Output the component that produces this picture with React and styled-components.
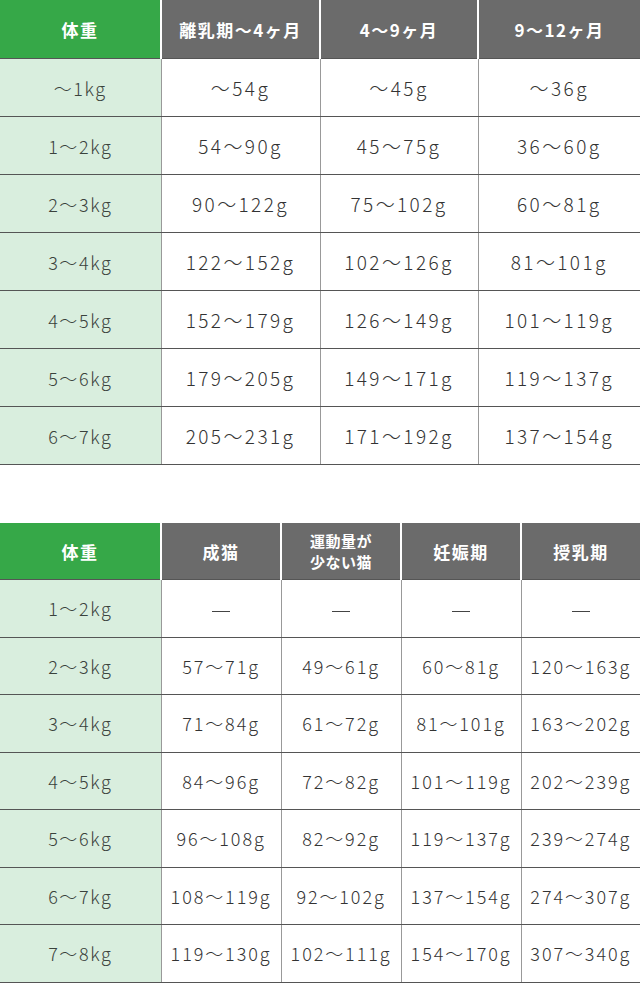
import React from "react";
import styled, { createGlobalStyle } from "styled-components";

const Global = createGlobalStyle`
  html, body { margin: 0; padding: 0; background: #fff; }
  body { font-family: "Noto Sans CJK JP", "Noto Sans", sans-serif; color: #333; }
`;

const Page = styled.div`
  display: flex;
  flex-direction: column;
  gap: 58px;
  width: 640px;
`;

const Table = styled.table`
  width: 640px;
  border-collapse: collapse;
  table-layout: fixed;
`;

const Head = styled.th`
  height: ${(p) => p.$h}px;
  padding: 0;
  background: ${(p) => (p.$first ? "#36a848" : "#6b6b6b")};
  color: #fff;
  font-weight: 700;
  font-size: ${(p) => (p.$small ? 15 : 17)}px;
  line-height: ${(p) => (p.$small ? "21px" : "1")};
  letter-spacing: ${(p) => (p.$small ? "0.5px" : "1.5px")};
  text-align: center;
  vertical-align: middle;
  border-bottom: 1px solid #555;
  border-left: ${(p) => (p.$first ? "none" : "2px solid #fff")};
`;

const Label = styled.td`
  height: ${(p) => p.$h}px;
  padding: 0;
  background: #d9eede;
  color: #3a423c;
  font-size: 18px;
  font-weight: 300;
  letter-spacing: 1.6px;
  text-align: center;
  vertical-align: middle;
  border-bottom: 1px solid #555;
`;

const Cell = styled.td`
  height: ${(p) => p.$h}px;
  padding: 0;
  background: #fff;
  color: #333;
  font-size: ${(p) => (p.$compact ? 18 : 19)}px;
  font-weight: 300;
  letter-spacing: ${(p) => (p.$compact ? "1.9px" : "2.4px")};
  text-align: center;
  vertical-align: middle;
  white-space: nowrap;
  border-bottom: 1px solid #555;
  border-left: 1px solid #999;
`;

const Dash = styled.span`
  display: inline-block;
  width: 18px;
  height: 1px;
  background: #444;
  vertical-align: middle;
`;

const table1 = {
  head: ["体重", "離乳期～4ヶ月", "4～9ヶ月", "9～12ヶ月"],
  rows: [
    ["～1kg", "～54g", "～45g", "～36g"],
    ["1～2kg", "54～90g", "45～75g", "36～60g"],
    ["2～3kg", "90～122g", "75～102g", "60～81g"],
    ["3～4kg", "122～152g", "102～126g", "81～101g"],
    ["4～5kg", "152～179g", "126～149g", "101～119g"],
    ["5～6kg", "179～205g", "149～171g", "119～137g"],
    ["6～7kg", "205～231g", "171～192g", "137～154g"],
  ],
};

const table2 = {
  head: ["体重", "成猫", "運動量が\n少ない猫", "妊娠期", "授乳期"],
  rows: [
    ["1～2kg", "-", "-", "-", "-"],
    ["2～3kg", "57～71g", "49～61g", "60～81g", "120～163g"],
    ["3～4kg", "71～84g", "61～72g", "81～101g", "163～202g"],
    ["4～5kg", "84～96g", "72～82g", "101～119g", "202～239g"],
    ["5～6kg", "96～108g", "82～92g", "119～137g", "239～274g"],
    ["6～7kg", "108～119g", "92～102g", "137～154g", "274～307g"],
    ["7～8kg", "119～130g", "102～111g", "154～170g", "307～340g"],
  ],
};

function DataTable({ data, widths, headH, rowH, compact }) {
  return (
    <Table>
      <colgroup>
        {widths.map((w, i) => (
          <col key={i} style={{ width: w }} />
        ))}
      </colgroup>
      <thead>
        <tr>
          {data.head.map((h, i) => {
            const lines = h.split("\n");
            return (
              <Head key={i} $first={i === 0} $h={headH} $small={lines.length > 1}>
                {lines.map((l, j) => (
                  <React.Fragment key={j}>
                    {j > 0 && <br />}
                    {l}
                  </React.Fragment>
                ))}
              </Head>
            );
          })}
        </tr>
      </thead>
      <tbody>
        {data.rows.map((r, i) => (
          <tr key={i}>
            <Label $h={rowH}>{r[0]}</Label>
            {r.slice(1).map((c, j) => (
              <Cell key={j} $h={rowH} $compact={compact}>
                {c === "-" ? <Dash /> : c}
              </Cell>
            ))}
          </tr>
        ))}
      </tbody>
    </Table>
  );
}

export default function App() {
  return (
    <>
      <Global />
      <Page>
        <DataTable data={table1} widths={[161, 159, 158, 162]} headH={58} rowH={57} />
        <DataTable data={table2} widths={[161, 120, 120, 120, 119]} headH={56} rowH={56.5} compact />
      </Page>
    </>
  );
}
